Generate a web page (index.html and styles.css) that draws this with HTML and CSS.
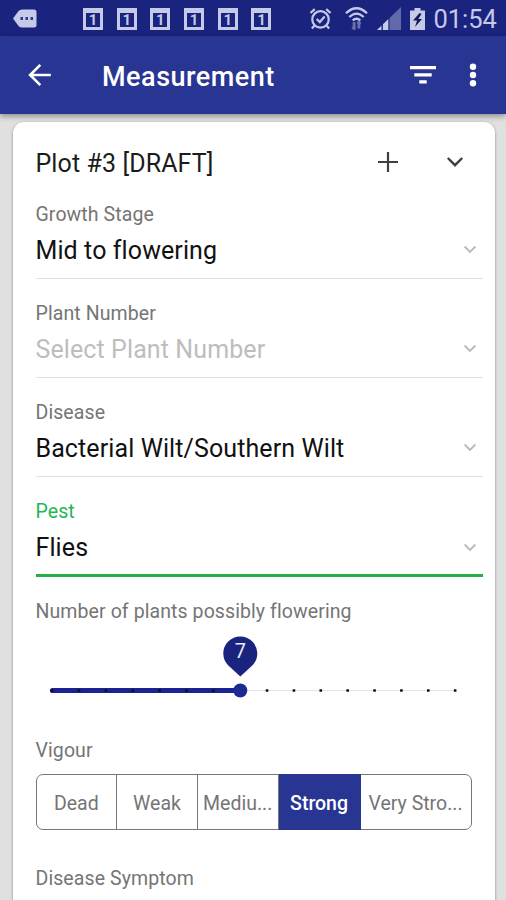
FILE: index.html
```html
<!DOCTYPE html>
<html lang="en">
<head>
<meta charset="utf-8">
<title>Measurement</title>
<link rel="stylesheet" href="styles.css">
</head>
<body>
<svg class="defs" aria-hidden="true">
  <symbol id="chevron" viewBox="0 0 18 12"><path d="M1.8 2 9 9.2 16.2 2" fill="none" stroke="currentColor" stroke-width="2.4"/></symbol>
</svg>
<header class="status">
  <svg class="message" viewBox="0 0 24 19"><path d="M0 9.5 5.5 2Q7 .5 9 .5H21Q23.500 .5 23.500 3V16Q23.500 18.500 21 18.500H9Q7 18.500 5.500 17Z" fill="#c5cae9"/><path d="M7.500 8h2.500v3H7.500zM12.500 8H15v3h-2.500zM17.500 8H20v3h-2.500z" fill="#343b82"/></svg>
  <div class="days"><span class="day">1</span><span class="day">1</span><span class="day">1</span><span class="day">1</span><span class="day">1</span><span class="day">1</span></div>
  <svg class="alarm" viewBox="0 0 24 24" fill="none" stroke="#c5cae9" stroke-width="2.300"><circle cx="12" cy="13" r="8.600"/><path d="m8 12.500 3.300 3.200L16.300 10"/><path d="M1.500 6.300 6 2.200M22.500 6.300 18 2.200M5.500 19.500 3 22.500M18.500 19.500 21 22.500"/></svg>
  <svg class="wifi" viewBox="0 0 24 26" fill="none" stroke="#c5cae9" stroke-width="2.300"><path d="M1 7Q12-3.500 23 7M4.500 11Q12 3.700 19.500 11M8 14.500q4-3.500 8 0"/><path d="M9.500 16v8M14.500 15v8" stroke="#6a70ad" stroke-width="3"/><path d="m6.500 21 3 4 2-4zM12 18l2.500-3.500 3 3.500z" fill="#6a70ad" stroke="none"/></svg>
  <svg class="signal" viewBox="0 0 24 23"><path d="M0 23 24 0V23Z" fill="#6269a9"/><path d="M0 23 4.500 18.700V23ZM6 23V17.300L11.500 12V23Z" fill="#c5cae9"/><path d="M5.200 17v6M12 11v12" stroke="#1a237e" stroke-width="1"/></svg>
  <svg class="battery" viewBox="0 0 15 22"><path d="M4.500 0h6v2.500H15V22H0V2.500h4.500z" fill="#c5cae9"/><path d="M9.500 5 3 12.500h4L5 19l7-8H8.300l3.200-5z" fill="#151b57"/></svg>
  <span class="clock">01:54</span>
</header>
<nav class="appbar">
  <svg class="back" viewBox="0 0 24 24" fill="none" stroke="#fff" stroke-width="2.600"><path d="M23.300 12H2.500M12.800 1.800 2.600 12l10.200 10.200"/></svg>
  <h1 class="title">Measurement</h1>
  <svg class="filter" viewBox="0 0 26 18" fill="#fff"><path d="M0 0h26v3.200H0zM4.300 7.200h17.400v3.200H4.300zM9.300 14.300h7.400v3.200H9.300z"/></svg>
  <svg class="more" viewBox="0 0 8 24" fill="#fff"><circle cx="4" cy="3.700" r="3.200"/><circle cx="4" cy="12" r="3.200"/><circle cx="4" cy="20.300" r="3.200"/></svg>
</nav>
<main class="page">
  <section class="card">
    <div class="card-head">
      <h2 class="plot">Plot #3 [DRAFT]</h2>
      <svg class="plus" viewBox="0 0 20 20"><path d="M10 0v20M0 10h20" stroke="#3f3f3f" stroke-width="2.200"/></svg>
      <svg class="expand"><use href="#chevron"/></svg>
    </div>
    <div class="field">
      <div class="label">Growth Stage</div>
      <div class="value"><span>Mid to flowering</span><svg class="arrow"><use href="#chevron"/></svg></div>
    </div>
    <div class="field">
      <div class="label">Plant Number</div>
      <div class="value placeholder"><span>Select Plant Number</span><svg class="arrow"><use href="#chevron"/></svg></div>
    </div>
    <div class="field">
      <div class="label">Disease</div>
      <div class="value"><span>Bacterial Wilt/Southern Wilt</span><svg class="arrow"><use href="#chevron"/></svg></div>
    </div>
    <div class="field active">
      <div class="label">Pest</div>
      <div class="value"><span>Flies</span><svg class="arrow"><use href="#chevron"/></svg></div>
    </div>
    <div class="label">Number of plants possibly flowering</div>
    <svg class="slider" viewBox="0 0 436 78">
      <path d="M204.500 55.500H419" stroke="#e4e4e8" stroke-width="1"/>
      <path d="M16.500 55.500H204" stroke="#1a2391" stroke-width="5.200" stroke-linecap="round"/>
      <path d="M14.800 55.500H421" stroke="#111" stroke-width="2.600" stroke-dasharray="2.600 24.270"/>
      <circle cx="204.300" cy="55.500" r="7" fill="#1d2b91"/>
      <path d="M204.300 41.500 191.800 30A17 17 0 1 1 216.800 30Z" fill="#1a237e"/>
      <text x="204.300" y="23" text-anchor="middle" class="amount">7</text>
    </svg>
    <div class="label">Vigour</div>
    <div class="segments">
      <span class="segment">Dead</span><span class="segment">Weak</span><span class="segment">Mediu...</span><span class="segment selected">Strong</span><span class="segment wide">Very Stro...</span>
    </div>
    <div class="label">Disease Symptom</div>
  </section>
</main>
</body>
</html>
```
FILE: styles.css
```css
* { box-sizing: border-box; }
body {
  margin: 0;
  height: 900px;
  overflow: hidden;
  display: flex;
  flex-direction: column;
  font-family: Roboto, "Liberation Sans", sans-serif;
  background: #e0e0e0;
}
svg { display: block; flex: none; }
.defs { width: 0; height: 0; position: absolute; }
.status {
  flex: none;
  display: flex;
  align-items: center;
  height: 36px;
  padding-left: 13px;
  background: #1a237e;
  color: #c5cae9;
}
.message { width: 24px; height: 19px; }
.days { display: flex; gap: 13.700px; margin: 1px 0 0 46px; }
.day {
  width: 20px;
  height: 22px;
  border: 3px solid #c5cae9;
  border-top-width: 5px;
  font-size: 15px;
  line-height: 15px;
  font-weight: 700;
  text-align: center;
}
.alarm { width: 23px; height: 23px; margin-left: 38px; }
.wifi { width: 23px; height: 26px; margin: 2px 0 0 13px; }
.signal { width: 24px; height: 23px; margin: 1px 0 0 9px; }
.battery { width: 15px; height: 22px; margin: 1px 0 0 9px; }
.clock { margin: 2px 0 0 8px; font-size: 25.500px; line-height: 36px; }
.appbar {
  flex: none;
  display: flex;
  align-items: center;
  height: 78px;
  padding: 0 29px 0 27px;
  background: #283593;
  box-shadow: 0 2px 6px rgba(0, 0, 0, .4);
  z-index: 1;
}
.back { width: 25px; height: 24px; }
.title { margin: 3px auto 0 50px; color: #fff; font-size: 27px; letter-spacing: .5px; font-weight: 500; line-height: 40px; }
.filter { width: 26px; height: 18px; margin-right: 33px; }
.more { width: 8px; height: 24px; }
.page { padding: 8px 11px 0 12.500px; }
.card {
  height: 800px;
  padding: 0 12px 0 23px;
  border-radius: 11px;
  background: #fff;
  box-shadow: 0 1px 3px rgba(0, 0, 0, .4);
}
.card-head { display: flex; align-items: center; height: 81px; }
.plot { margin: 2px auto 0 0; font-size: 25px; letter-spacing: .1px; font-weight: 400; line-height: 40px; color: #1c1c1c; }
.plus { width: 20px; height: 20px; margin: 0 48px 2px 0; }
.expand { width: 18px; height: 12px; margin: 0 19px 1px 0; color: #3f3f3f; }
.field { height: 99px; }
.label { font-size: 19.500px; letter-spacing: .09px; line-height: 24px; color: #757575; }
.value {
  display: flex;
  align-items: center;
  justify-content: space-between;
  height: 52px;
  padding-bottom: 5px;
  border-bottom: 1.500px solid #e0e0e0;
  font-size: 25px;
  letter-spacing: .1px;
  color: #111;
}
.arrow { width: 14px; height: 9px; margin: 0 6px 1px 0; color: #b9b9b9; }
.placeholder { color: #bdbdbd; }
.active .label { color: #1fb655; }
.active .value { height: 53px; padding-bottom: 3px; border-bottom: 3px solid #27ae47; }
.active { height: 100px; }
.slider { width: 436px; height: 78px; margin-top: 11px; }
.amount { fill: #e8eaf6; font-size: 20px; font-weight: 400; }
.slider + .label { margin-top: 26px; }
.segments {
  display: flex;
  width: 436px;
  height: 56px;
  margin: 11px 0 37px;
  border: 1.500px solid #777;
  border-radius: 7px;
}
.segment {
  width: 80.700px;
  border-right: 1.500px solid #777;
  font-size: 19.500px;
  line-height: 57px;
  text-align: center;
  color: #757575;
  white-space: nowrap;
}
.segment.selected { width: 82px; margin: -1px 0; border-color: #283593; background: #283593; color: #fff; font-weight: 500; line-height: 59px; }
.segment.wide { flex: 1; border: 0; }
```
